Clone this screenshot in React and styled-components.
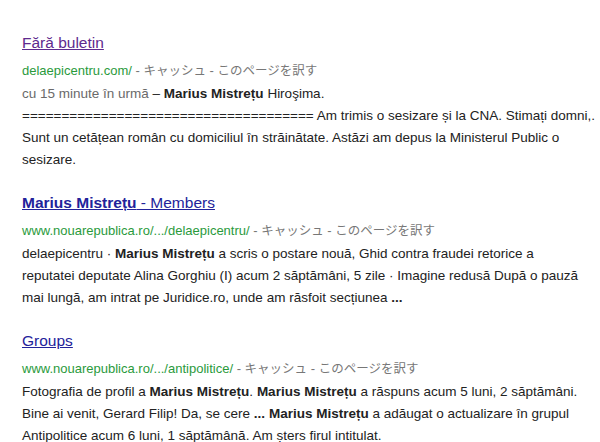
import styled, { createGlobalStyle } from 'styled-components';

const GlobalStyle = createGlobalStyle`
  body {
    margin: 0;
    background: #fff;
    font-family: Arial, "Liberation Sans", "Noto Sans CJK JP", sans-serif;
  }
`;

const Page = styled.div`
  padding: 32px 0 0 22px;
  width: 600px;
  height: 442px;
  box-sizing: border-box;
  overflow: hidden;
`;

const Result = styled.div`
  margin-bottom: 21px;
`;

const Title = styled.a`
  display: inline-block;
  font-size: 15.5px;
  line-height: 22px;
  color: ${(p) => (p.$visited ? '#5e2a8e' : '#22229a')};
  text-decoration: underline;
  cursor: pointer;
`;

const UrlLine = styled.div`
  font-size: 13px;
  line-height: 22px;
  margin-top: 5px;
  color: #777;
  white-space: nowrap;
`;

const Url = styled.span`
  color: #2a9a3c;
`;

const Cjk = styled.span`
  font-family: "Noto Sans CJK JP", sans-serif;
  font-size: 12.5px;
  color: #777;
`;

const Snippet = styled.div`
  font-size: 13.5px;
  line-height: 22px;
  margin-top: 1px;
  color: #222;
  white-space: nowrap;
`;

const Gray = styled.span`
  color: #6a6a6a;
`;

const CachedLinks = () => (
  <>
    {' - '}
    <Cjk>キャッシュ</Cjk>
    {' - '}
    <Cjk>このページを訳す</Cjk>
  </>
);

export default function App() {
  return (
    <Page>
      <GlobalStyle />
      <Result>
        <Title $visited>Fără buletin</Title>
        <UrlLine>
          <Url>delaepicentru.com/</Url>
          <CachedLinks />
        </UrlLine>
        <Snippet>
          <Gray>cu 15 minute în urmă</Gray> – <b>Marius Mistrețu</b> Hiroşima.
          <br />
          ===================================== Am trimis o sesizare și la CNA. Stimați domni,.
          <br />
          Sunt un cetățean român cu domiciliul în străinătate. Astăzi am depus la Ministerul Public o
          <br />
          sesizare.
        </Snippet>
      </Result>

      <Result>
        <Title>
          <b>Marius Mistrețu</b> - Members
        </Title>
        <UrlLine>
          <Url>www.nouarepublica.ro/.../delaepicentru/</Url>
          <CachedLinks />
        </UrlLine>
        <Snippet>
          delaepicentru · <b>Marius Mistrețu</b> a scris o postare nouă, Ghid contra fraudei retorice a
          <br />
          reputatei deputate Alina Gorghiu (I) acum 2 săptămâni, 5 zile · Imagine redusă După o pauză
          <br />
          mai lungă, am intrat pe Juridice.ro, unde am răsfoit secțiunea <b>...</b>
        </Snippet>
      </Result>

      <Result>
        <Title>Groups</Title>
        <UrlLine>
          <Url>www.nouarepublica.ro/.../antipolitice/</Url>
          <CachedLinks />
        </UrlLine>
        <Snippet>
          Fotografia de profil a <b>Marius Mistrețu</b>. <b>Marius Mistrețu</b> a răspuns acum 5 luni, 2 săptămâni.
          <br />
          Bine ai venit, Gerard Filip! Da, se cere <b>...</b> <b>Marius Mistrețu</b> a adăugat o actualizare în grupul
          <br />
          Antipolitice acum 6 luni, 1 săptămână. Am șters firul intitulat.
        </Snippet>
      </Result>
    </Page>
  );
}
